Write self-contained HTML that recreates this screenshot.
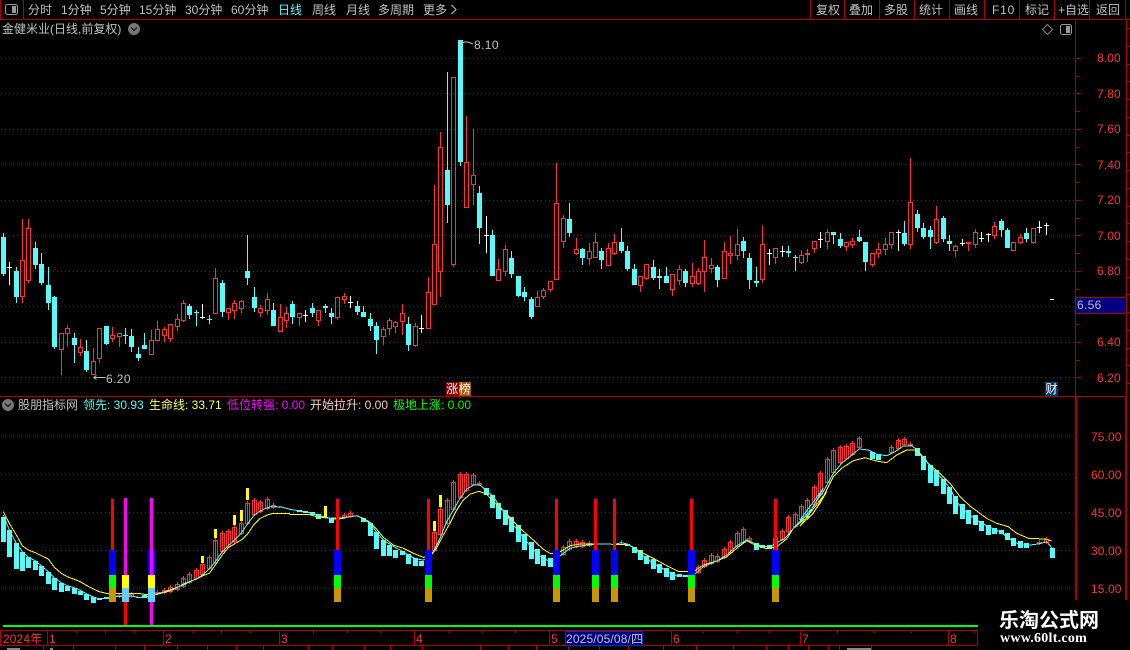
<!DOCTYPE html>
<html><head><meta charset="utf-8"><style>
html,body{margin:0;padding:0;background:#000;width:1130px;height:650px;overflow:hidden}
#w{position:relative;width:1130px;height:650px;overflow:hidden;background:#000;font:12px "Liberation Sans","WenQuanYi Zen Hei","Noto Sans CJK SC",sans-serif;color:#c0c0c0}
svg{position:absolute;left:0;top:0}
.t{position:absolute;white-space:pre;line-height:14px;height:14px}
.r{color:#ff3232;letter-spacing:.1px}
</style></head><body><div id="w">
<svg id="s" width="1130" height="650" viewBox="0 0 1130 650" shape-rendering="crispEdges"></svg>
<span class="t" style="left:28px;top:3px">分时</span>
<span class="t" style="left:61px;top:3px">1分钟</span>
<span class="t" style="left:100px;top:3px">5分钟</span>
<span class="t" style="left:139px;top:3px">15分钟</span>
<span class="t" style="left:185px;top:3px">30分钟</span>
<span class="t" style="left:231px;top:3px">60分钟</span>
<span class="t" style="left:278px;top:3px;color:#54fcfc">日线</span>
<span class="t" style="left:312px;top:3px">周线</span>
<span class="t" style="left:346px;top:3px">月线</span>
<span class="t" style="left:378px;top:3px">多周期</span>
<span class="t" style="left:423px;top:3px">更多</span>
<span class="t" style="left:816px;top:3px">复权</span>
<span class="t" style="left:849px;top:3px">叠加</span>
<span class="t" style="left:884px;top:3px">多股</span>
<span class="t" style="left:919px;top:3px">统计</span>
<span class="t" style="left:954px;top:3px">画线</span>
<span class="t" style="left:992px;top:3px;letter-spacing:.8px">F10</span>
<span class="t" style="left:1025px;top:3px">标记</span>
<span class="t" style="left:1058px;top:3px">+自选</span>
<span class="t" style="left:1096px;top:3px">返回</span>
<span class="t" style="left:2px;top:22px">金健米业(日线,前复权)</span>
<span class="t" style="left:474px;top:38px;letter-spacing:.4px">8.10</span>
<span class="t" style="left:106px;top:372px;letter-spacing:.4px">6.20</span>
<span class="t r" style="left:1097px;top:51px">8.00</span>
<span class="t r" style="left:1097px;top:87px">7.80</span>
<span class="t r" style="left:1097px;top:122px">7.60</span>
<span class="t r" style="left:1097px;top:158px">7.40</span>
<span class="t r" style="left:1097px;top:193px">7.20</span>
<span class="t r" style="left:1097px;top:229px">7.00</span>
<span class="t r" style="left:1097px;top:264px">6.80</span>
<span class="t r" style="left:1097px;top:335px">6.40</span>
<span class="t r" style="left:1097px;top:371px">6.20</span>
<span class="t" style="left:1077px;top:298px;letter-spacing:.3px">6.56</span>
<span class="t" style="left:446px;top:382px;width:12.5px;background:#8c0000;color:#fff;text-align:center;overflow:hidden">涨</span>
<span class="t" style="left:458.5px;top:382px;width:12.5px;background:#a05a00;color:#fff;text-align:center;overflow:hidden">榜</span>
<span class="t" style="left:1045px;top:382px;width:13px;background:#003c6e;color:#fff;text-align:center;overflow:hidden">财</span>
<span class="t" style="left:18px;top:398px">股朋指标网</span>
<span class="t" style="left:83px;top:398px;color:#54fcfc">领先: 30.93</span>
<span class="t" style="left:149px;top:398px;color:#ffff54">生命线: 33.71</span>
<span class="t" style="left:227px;top:398px;color:#ff00ff">低位转强: 0.00</span>
<span class="t" style="left:310px;top:398px;color:#ffc8c8">开始拉升: 0.00</span>
<span class="t" style="left:393px;top:398px;color:#00ff00">极地上涨: 0.00</span>
<span class="t r" style="left:1091px;top:430px">75.00</span>
<span class="t r" style="left:1091px;top:468px">60.00</span>
<span class="t r" style="left:1091px;top:506px">45.00</span>
<span class="t r" style="left:1091px;top:544px">30.00</span>
<span class="t r" style="left:1091px;top:582px">15.00</span>
<span class="t r" style="left:3px;top:632px">2024年</span>
<span class="t r" style="left:49px;top:632px">1</span>
<span class="t r" style="left:165px;top:632px">2</span>
<span class="t r" style="left:281px;top:632px">3</span>
<span class="t r" style="left:416px;top:632px">4</span>
<span class="t r" style="left:551px;top:632px">5</span>
<span class="t" style="left:566px;top:632px;letter-spacing:.15px">2025/05/08/四</span>
<span class="t r" style="left:673px;top:632px">6</span>
<span class="t r" style="left:802px;top:632px">7</span>
<span class="t r" style="left:950px;top:632px">8</span>
<span class="t" style="left:999px;top:608px;height:22px;line-height:22px;font:bold 20px/22px 'Noto Sans CJK SC',sans-serif;color:#fff">乐淘公式网</span>
<span class="t" style="left:1000px;top:632px;font:bold 14px/14px 'Liberation Serif',serif;color:#fff;letter-spacing:.25px">www.60lt.com</span>
</div>
<script>
var o='';
function R(x,y,w,h,c){o+='<rect x="'+x+'" y="'+y+'" width="'+w+'" height="'+h+'" fill="'+c+'"/>';}
function H(x,y,w,h,c){o+='<rect x="'+(x+.5)+'" y="'+(y+.5)+'" width="'+(w-1)+'" height="'+(h-1)+'" fill="none" stroke="'+c+'"/>';}
function col(i){return Math.floor(3.2+i*6.4375);}
var RED='#ff3232',CY='#54fcfc',DK='#b00000',DOT='#b00000';
[58,93,129,164,200,235,271,306,342,377,436,474,512,550,588].forEach(function(y){
 o+='<line x1="1" x2="1075" y1="'+(y+.5)+'" y2="'+(y+.5)+'" stroke="'+DOT+'" stroke-dasharray="1 3"/>';
});
var segs=[[200,[
['c',99,111,222,228],['w',186,201,204,255],['c',202,213,291,309],['r',57,181,290,309],['r',57,85,242,249],['c',126,144,195,207],['c',159,192,249,255],['c',201,255,309,330],['c',288,291,441,447],['r',400,400,449,525],['r',375,385,401,441],['c',400,414,435,489],['r',417,442,458,468],['c',420,453,510,516],['r',444,484,524,526],['r',385,385,476,489],['c',378,378,432,435],['r',381,406,416,427],['r',400,400,411,441],['c',384,405,408,432],['c',387,408,441,456],['c',441,462,474,483],['c',399,435,447,447],['r',390,420,465,465],['r',363,388,423,423],['r',381,388,408,426],['r',372,373,417,426],['r',342,358,381,393],['r',300,310,363,366],['c',312,318,345,357],['c',330,336,339,378],['w',312,351,354,357],['c',345,357,360,372],['r',204,235,342,342],['c',240,249,336,351],['r',325,325,339,360],['r',300,310,333,357],['r',300,304,327,339],['c',105,213,234,255],['c',261,291,324,336],['r',315,325,339,351],['r',279,298,332,345],['c',309,330,378,378]]],
[40,[
['r',792,832,875,875],['r',801,820,842,864],['c',783,792,831,852],['r',820,820,833,858],['w',810,825,828,846],['c',789,804,819,831],['r',810,811,842,858],['c',792,798,804,819],['c',804,819,831,852],['r',771,772,833,840],['r',759,769,779,792],['w',768,785,788,804],['c',783,798,816,825],['c',798,816,831,831],['c',819,837,858,873],['c',846,858,900,942],['r',861,868,890,915],['r',835,841,866,885],['r',843,847,860,879],['r',792,820,847,885],['c',831,852,915,933],['r',850,859,917,920],['w',825,863,866,879],['r',711,757,866,866],['r',435,613,794,794],['r',276,322,695,771],['c',96,390,495,549],['r',112,112,674,680],['c',0,0,366,378],['r',228,367,503,503],['r',268,406,434,495],['c',438,459,564,612],['w',528,585,588,639],['c',570,585,708,708],['r',657,688,722,722],['r',615,628,695,708],['c',633,654,702,714],['c',708,708,768,771],['c',741,756,771,783],['c',771,777,831,837],['r',753,772,800,800],['r',744,750,770,776],['r',724,724,749,756],['r',370,490,721,721]]],
[140,[
['r',225,235,305,324],['c',189,237,279,291],['r',294,328,342,345],['c',324,327,354,375],['r',309,334,357,375],['r',279,307,353,353],['c',324,333,360,387],['r',309,325,377,377],['r',282,307,342,345],['c',264,306,333,339],['c',318,333,387,393],['c',372,387,435,435],['r',409,409,437,456],['r',372,373,417,420],['c',360,381,414,420],['c',387,408,414,447],['c',381,408,429,429],['r',403,403,449,468],['r',375,388,422,435],['c',387,393,429,441],['r',369,409,431,441],['r',384,394,431,435],['r',300,352,395,456],['r',354,376,388,399],['c',375,381,420,441],['r',306,334,416,416],['r',288,340,347,372],['r',267,313,347,360],['c',291,303,333,354],['c',339,354,420,447],['c',381,423,429,441],['r',258,313,421,429],['w',327,339,342,375],['r',325,325,353,372],['w',318,333,336,351],['c',318,333,339,351],['c',345,350,353,393],['r',330,346,368,371],['r',327,340,346,366],['r',303,304,328,339],['w',276,296,299,324],['r',267,277,305,327],['c',276,276,285,312],
['c',279,297,318,324],['r',306,307,320,333],['r',294,304,314,324],['c',270,291,303,306],['c',306,306,366,393],['r',339,340,374,381],['r',309,328,342,354],['r',294,313,329,345],['r',276,277,314,327],['w',270,275,278,333],['c',243,279,312,318],['r',54,187,314,327],['c',210,222,264,276],['c',249,264,291,297],['c',258,270,291,327],['r',198,238,308,311],['c',228,234,297,306],['c',285,303,312,333],['r',315,319,334,351],['w',297,308,311,318],['r',306,307,313,333],['r',267,277,314,324],['w',276,293,296,306],['w',279,281,284,306],['r',246,259,287,297],['c',237,243,270,291],['c',264,270,324,324],['r',307,307,334,334],['r',282,292,309,312],['c',264,279,297,306],['r',265,265,309,312],['w',243,260,263,279],['w',249,254,257,285]]]];
var idx=0;
segs.forEach(function(s){var y0=s[0];s[1].forEach(function(d){
 var c=col(idx++),hi=Math.round(y0+d[1]/3),t=Math.round(y0+d[2]/3),b=Math.round(y0+d[3]/3),lo=Math.round(y0+d[4]/3);
 if(b<=t)b=t+1;
 if(d[0]=='r'){ if(hi<t)R(c,hi,1,t-hi,RED); if(lo>b)R(c,b,1,lo-b,RED); H(c-2,t,5,b-t,RED);}
 else{var cc=d[0]=='c'?CY:'#fff'; R(c,hi,1,Math.max(lo-hi,1),cc); R(c-2,t,5,b-t,cc);}
});});
R(1050,299,4,1,'#fff');
function L(y0,a){a.forEach(function(d){var c=col(d[0]),t=Math.round(y0+d[2]/3),b=Math.round(y0+d[3]/3);if(b<=t)b=t+1;
 if(d[1]=='r'){R(c,t-2,1,b-t+3,RED);H(c-2,t,5,b-t,RED);}
 else if(d[1]=='c'){R(c-2,t,5,b-t,CY);}
 else R(c-1,t,3,b-t,'#ffff00');});}
L(395,[[0,'c',366,441],[1,'c',405,486],[2,'c',444,522],[3,'c',471,528],[4,'c',486,519],[5,'c',498,525],[6,'c',513,543],[7,'c',531,567],[8,'c',549,585],[9,'c',564,591],[10,'c',573,588],[11,'c',579,597],[12,'c',588,600],[13,'c',597,615],[14,'c',606,624],[15,'c',609,614],[16,'c',607,612],[18,'r',600,606],[20,'r',598,605],[21,'c',605,608],[22,'c',600,608],[24,'r',590,598],[25,'r',585,595],[26,'r',576,590],[27,'r',566,585],[28,'r',548,575],[29,'r',537,563],[30,'r',525,552],[31,'r',507,540],[32,'r',487,523],[33,'r',436,505],[34,'r',415,472],[35,'r',408,455],[36,'r',396,440],[37,'r',384,418],[38,'r',325,388],[39,'r',315,360],[40,'r',320,350],[41,'r',312,342],[42,'r',330,338],
[31,'y',483,504],[33,'y',402,429],[36,'y',360,390],[37,'y',345,378],[38,'y',279,315]]);
L(450,[[46,'c',180,186],[47,'c',183,188],[48,'c',185,196],[49,'c',192,206],[51,'c',205,219],[53,'r',195,205],[54,'r',188,200],[56,'c',205,216],[57,'c',220,258],[58,'c',246,297],[59,'c',270,318],[60,'c',284,318],[61,'c',300,324],[62,'c',304,315],[63,'c',313,342],[64,'c',325,348],[65,'c',333,348],[67,'r',246,303],[68,'r',177,255],[69,'r',150,222],[70,'r',96,180],[71,'r',72,145],[72,'r',72,122],[73,'r',75,105],[74,'r',100,105],[75,'c',114,135],[76,'c',135,174],[77,'c',159,207],[78,'c',180,225],[79,'c',201,246],[80,'c',225,276],[81,'c',252,300],[82,'c',276,327],[83,'c',297,342],[84,'c',315,348],[85,'c',325,351],
[50,'y',168,203],[67,'y',213,243],[68,'y',135,171],
[87,'r',290,315],[88,'r',273,300],[89,'r',273,290],[90,'r',276,290],[91,'r',278,287],[96,'r',275,280],[97,'c',282,288],[98,'c',290,309],[99,'c',300,330],[100,'c',318,342],[101,'c',327,357],[102,'c',342,369],[103,'c',354,381],[104,'c',366,390],[105,'c',372,381],[106,'c',375,381],[108,'r',352,368],[109,'r',330,352],[110,'r',315,342],[111,'r',318,336],[112,'r',297,325],[113,'r',276,308],[114,'r',249,291],[115,'r',238,278],[116,'r',264,273],[117,'c',279,300],[118,'c',285,295],[119,'c',285,297],[120,'r',264,300],[121,'r',243,270],[122,'r',201,247],[123,'r',192,232]]);
L(420,[[124,'r',258,300],[125,'r',240,285],[126,'r',201,255],[127,'r',159,225],[128,'r',117,190],[129,'r',90,160],[130,'r',81,130],[131,'r',78,118],[132,'r',69,105],[133,'r',54,85],[135,'c',96,118],[136,'c',102,120],[138,'r',81,100],[139,'r',60,88],[140,'r',57,75],[141,'r',72,78],[142,'c',84,108],[143,'c',108,150],[144,'c',135,190],[145,'c',150,198],[146,'c',177,222],[147,'c',200,252],[148,'c',228,282],[149,'c',252,297],[150,'c',270,312],[151,'c',285,315],[152,'c',303,333],[153,'c',315,345],[154,'c',324,342],[155,'c',330,342],[156,'c',339,360],[157,'c',354,378],[158,'c',363,384],[159,'c',369,384],[161,'r',366,372],[162,'r',358,370],[163,'c',384,414]]);
function P(c,segsL){var p=[];segsL.forEach(function(s){var a=s[2];for(var i=0;i<a.length;i+=2){p.push((s[0]+a[i]/3).toFixed(1)+','+(s[1]+a[i+1]/3).toFixed(1));}});
 o+='<polyline fill="none" stroke="'+c+'" stroke-width="1" points="'+p.join(' ')+'"/>';}
P('#ffff00',[[0,395,[10,350,28,385,49,420,67,452,85,465,106,473,124,482,145,492,163,517,184,535,202,545,223,553,241,560,259,571,280,582,298,590,319,595,337,596,358,596,376,595,394,595,415,595,433,598,454,600,472,598,493,592,511,587,532,578,550,567,568,560,589,552,607,543,628,535,646,510,667,480,685,458,703,447,724,435,742,418,763,387,781,370,802,360,820,355,838,355]],
[280,450,[0,190,28,190,30,193,85,193,110,200,150,205,190,203,230,197,250,205,270,217,290,238,310,262,340,285,370,295,400,310,430,322,450,320,470,293,490,255,510,220,530,180,550,150,570,133,597,124,620,133,650,165,680,192,720,235,760,270,790,298,810,310,830,310,850,300]],
[560,450,[30,287,60,282,107,282,163,283,205,283,240,305,280,325,320,347,355,364,385,364,405,362,430,345,470,333,500,320,530,295,560,272,585,285,620,296,650,290,680,267,700,235,730,210,755,195,780,160,800,125]],
[800,420,[0,318,40,280,70,230,100,170,125,145,160,122,195,113,225,122,260,128,290,105,320,90,345,90,365,108,390,135,420,160,450,190,480,230,510,258,560,295,590,310,625,320,650,340,685,355,735,357,755,363]]]);
P(CY,[[0,395,[10,360,28,405,49,445,67,470,85,487,106,497,124,512,145,530,163,548,184,563,202,572,223,578,241,586,259,596,280,606,298,612,319,610,337,606,358,604,376,604,394,603,415,607,433,607,454,603,472,596,493,590,511,584,532,577,550,570,568,561,589,552,607,540,628,522,646,500,667,470,685,452,703,436,724,414,742,388,763,360,781,348,802,338,820,333,838,337]],
[280,450,[0,170,30,178,60,183,90,188,120,197,150,205,170,208,190,205,210,200,232,197,250,207,270,220,290,247,310,270,330,283,350,295,370,305,390,318,410,327,430,330,445,320,460,305,480,265,500,215,520,180,540,145,560,118,580,105,600,105,620,122,640,140,660,170,680,195,700,225,720,250,740,275,760,298,780,318,800,330,820,337,840,318]],
[560,450,[0,318,30,295,60,288,85,285,107,282,163,283,185,278,205,283,225,297,250,318,280,340,320,362,350,378,385,378,405,372,430,350,470,333,500,315,530,288,560,270,585,281,610,290,630,290,650,278,675,265,700,235,730,205,760,170,790,115]],
[800,420,[0,300,25,285,45,250,70,215,100,160,125,130,155,105,178,87,205,90,230,103,260,107,285,95,310,78,335,77,352,90,370,112,395,145,430,180,450,205,470,245,490,270,510,285,530,300,550,312,570,322,600,335,620,350,640,365,665,375,690,375,715,372,740,365,757,385]]]);
[112,337,428,556,595,614,691,775].forEach(function(c){
 R(c-1,498,3,1,'#0000ff');R(c-1,499,3,51,'#ff0000');R(c-3,550,7,25,'#0000ff');R(c-3,575,7,13,'#00ff00');R(c-3,588,7,14,'#c89600');});
R(124,498,3,77,'#ff00ff');R(122,575,7,13,'#ffff00');R(122,588,7,14,'#66ccff');R(124,602,3,23,'#ff0000');
R(148,550,7,25,'#0000ff');R(150,498,3,77,'#ff00ff');R(148,575,7,13,'#ffff00');R(148,588,7,14,'#66ccff');R(150,602,3,23,'#ff00ff');
R(3,625,975,2,'#00ff00');
R(0,19,1130,1,DK);R(23,0,1,19,DK);R(0,0,1,19,DK);
[810,844,879,914,949,984,1019,1054,1089,1125].forEach(function(x){R(x,0,1,19,DK);});
R(0,396,1126,1,DK);
R(1075,20,1,580,DK);R(1076,397,1,203,DK);
R(1126,20,1,580,DK);R(1125,397,1,203,DK);
[58,93,129,164,200,235,271,306,342,377].forEach(function(y){R(1076,y,5,1,DK);});
[76,111,147,182,218,253,289,324,360].forEach(function(y){R(1076,y,3,1,DK);});
for(var yy=28;yy<396;yy+=17.75)R(1127,Math.round(yy),3,1,DK);
R(1076,297,50,16,'#000080');H(1075,297,52,17,DK);
R(0,630,978,1,DK);R(0,645,978,1,DK);R(0,630,1,16,DK);R(977,630,1,16,DK);
[47,163,279,414,549,671,800,948].forEach(function(x){R(x,631,1,15,DK);});
[76,105,134,192,221,250,313,347,380,448,482,515,703,736,768,837,874,911,974].forEach(function(x){R(x,631,1,2,DK);});
R(565,631,78,15,'#000080');H(565,631,78,15,'#1a2ab0');
[43,73,115,144,177,207,236,263,308,332,364,390,422,480,508,536,568,599,628,663,696,733,766,788,808,828,839,871].forEach(function(x){R(x,646,1,4,DK);});
R(7,648,13,2,'#888');R(50,648,3,2,'#888');R(847,648,24,2,'#888');
R(978,600,152,50,'#000');
document.getElementById('s').innerHTML=o+
'<g shape-rendering="auto">'+
'<rect x="5.5" y="4.5" width="12" height="10" rx="2" fill="none" stroke="#999"/><rect x="12" y="6" width="4" height="7" fill="#999"/>'+
'<rect x="1060.5" y="24.5" width="11" height="10" rx="2" fill="none" stroke="#999"/><rect x="1066" y="26" width="4" height="7" fill="#999"/>'+
'<path d="M1047.5 24.5l5 5-5 5-5-5z" fill="none" stroke="#888"/>'+
'<circle cx="134" cy="29" r="6" fill="#777"/><path d="M131 27.5l3 3 3-3" fill="none" stroke="#111" stroke-width="1.2"/>'+
'<circle cx="8" cy="405" r="6" fill="#777"/><path d="M5 403.5l3 3 3-3" fill="none" stroke="#111" stroke-width="1.2"/>'+
'<path d="M451.5 5l4.5 4.5-4.5 4.5" fill="none" stroke="#c0c0c0"/>'+
'<path d="M460 41l3 2 1-1 4 0 5 2M460 41l1 3" fill="none" stroke="#c0c0c0"/>'+
'<path d="M93.5 377.5h12M93.5 377.5l3-2M93.5 377.5l3 2" fill="none" stroke="#c0c0c0"/>'+
'</g>';
</script>
</body></html>
